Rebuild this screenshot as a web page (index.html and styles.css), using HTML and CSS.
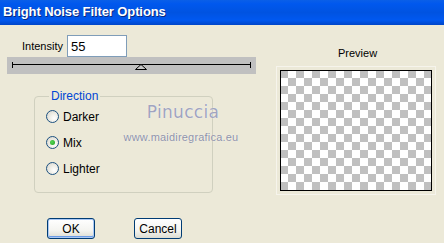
FILE: index.html
```html
<!DOCTYPE html>
<html lang="en">
<head>
  <meta charset="UTF-8">
  <title>Bright Noise Filter Options</title>
  <link rel="stylesheet" href="styles.css">
</head>
<body>
<div class="dialog">
  <div class="titlebar">Bright Noise Filter Options</div>

  <div class="content">
    <div class="left">
      <div class="intensity">
        <label class="label">Intensity</label>
        <div class="input">55</div>
      </div>

      <div class="slider">
        <svg width="249" height="17" viewBox="0 0 249 17">
          <line x1="5" y1="7.5" x2="244" y2="7.5" stroke="#000" stroke-width="1"/>
          <line x1="5.5" y1="5" x2="5.5" y2="11" stroke="#000" stroke-width="1"/>
          <line x1="243.5" y1="5" x2="243.5" y2="11" stroke="#000" stroke-width="1"/>
          <polygon points="134,7.5 128.5,12.5 139.5,12.5" fill="#c8c8c8" stroke="#000" stroke-width="1"/>
        </svg>
      </div>

      <fieldset class="group">
        <legend class="legend">Direction</legend>
        <div class="radio-row"><span class="radio"></span>Darker</div>
        <div class="radio-row"><span class="radio checked"></span>Mix</div>
        <div class="radio-row"><span class="radio"></span>Lighter</div>
      </fieldset>
    </div>

    <div class="right">
      <div class="preview-label">Preview</div>
      <div class="preview"></div>
    </div>
  </div>

  <div class="buttons">
    <div class="button default">OK</div>
    <div class="button">Cancel</div>
  </div>

  <div class="watermark">
    <div class="wm-name">Pinuccia</div>
    <div class="wm-url">www.maidiregrafica.eu</div>
  </div>
</div>
</body>
</html>
```

FILE: styles.css
```css
* {
  margin: 0;
  padding: 0;
  box-sizing: border-box;
}

body {
  width: 444px;
  height: 243px;
  overflow: hidden;
  background-color: #ece9d8;
  font-family: "Liberation Sans", Arial, sans-serif;
  font-size: 11px;
  color: #000;
}

.dialog {
  position: relative;
  height: 243px;
}

.titlebar {
  height: 25px;
  padding: 4px 0 0 3px;
  background: linear-gradient(to bottom, #0a5fe8 0%, #0058ee 15%, #0053e1 50%, #0058f0 80%, #0046c8 100%);
  color: #fff;
  font-family: "Liberation Sans", Arial, sans-serif;
  font-weight: bold;
  font-size: 13px;
  letter-spacing: -0.1px;
  text-shadow: 1px 1px 0 #0a2a80;
}

.content {
  display: flex;
}

.left {
  width: 273px;
  padding-left: 7px;
}

.intensity {
  display: flex;
  align-items: center;
  height: 22px;
  margin-top: 10px;
  padding-left: 15px;
}

.label {
  width: 45px;
}

.input {
  width: 60px;
  height: 22px;
  padding: 3px 0 0 3px;
  border: 1px solid #7f9db9;
  background-color: #fff;
  font-size: 13px;
}

.slider {
  width: 249px;
  height: 17px;
  background-color: #c0c0c0;
}

.slider svg {
  display: block;
}

.group {
  width: 179px;
  height: 104px;
  margin: 15px 0 0 27px;
  padding: 7px 0 0 11px;
  border: 1px solid #d0d0bf;
  border-radius: 4px;
}

.legend {
  margin-left: 3px;
  padding: 0 2px;
  color: #0046d5;
  font-size: 12px;
}

.radio-row {
  display: flex;
  align-items: center;
  gap: 4px;
  height: 13px;
  margin-bottom: 13px;
  font-size: 12px;
}

.radio {
  width: 13px;
  height: 13px;
  border: 1px solid #1c5180;
  border-radius: 50%;
  background: radial-gradient(circle at 65% 65%, #fff 0%, #f0efe8 40%, #d5d3ca 100%);
  display: flex;
  align-items: center;
  justify-content: center;
}

.radio.checked::after {
  content: "";
  width: 5px;
  height: 5px;
  border-radius: 50%;
  background: radial-gradient(circle at 40% 40%, #55d555, #21a121);
}

.right {
  width: 171px;
}

.preview-label {
  margin-top: 22px;
  padding-left: 65px;
  font-size: 11px;
}

.preview {
  width: 152px;
  height: 121px;
  margin: 11px 0 0 7px;
  border: 1px solid #000;
  background-color: #fff;
  background-image:
    linear-gradient(45deg, #c0c0c0 25%, transparent 25%, transparent 75%, #c0c0c0 75%),
    linear-gradient(45deg, #c0c0c0 25%, transparent 25%, transparent 75%, #c0c0c0 75%);
  background-size: 16px 16px;
  background-position: 7px -1px, 15px 7px;
  outline: 1px solid #f6f4ec;
  outline-offset: 3px;
}

.buttons {
  display: flex;
  gap: 39px;
  margin-top: 25px;
  padding-left: 47px;
}

.button {
  width: 48px;
  height: 21px;
  display: flex;
  align-items: center;
  justify-content: center;
  border: 1px solid #003c74;
  border-radius: 3px;
  background: linear-gradient(to bottom, #ffffff 0%, #f4f4f0 60%, #dcdcd2 100%);
  font-size: 12px;
}

.button.default {
  box-shadow: inset 0 0 0 1px #aac8f5, inset 0 -1px 0 1px #6b9be6;
}

.watermark {
  position: absolute;
  left: 122px;
  top: 101px;
  width: 122px;
  text-align: center;
  color: #a0a4bf;
  text-shadow: 0 0 1px #ffffff;
}

.wm-name {
  font-family: "DejaVu Sans", sans-serif;
  font-size: 17px;
  letter-spacing: 0.3px;
  line-height: 22px;
}

.wm-url {
  margin-top: 7px;
  margin-left: -4px;
  font-size: 11px;
  line-height: 14px;
  color: #8e92a8;
  letter-spacing: 0.2px;
}
```
